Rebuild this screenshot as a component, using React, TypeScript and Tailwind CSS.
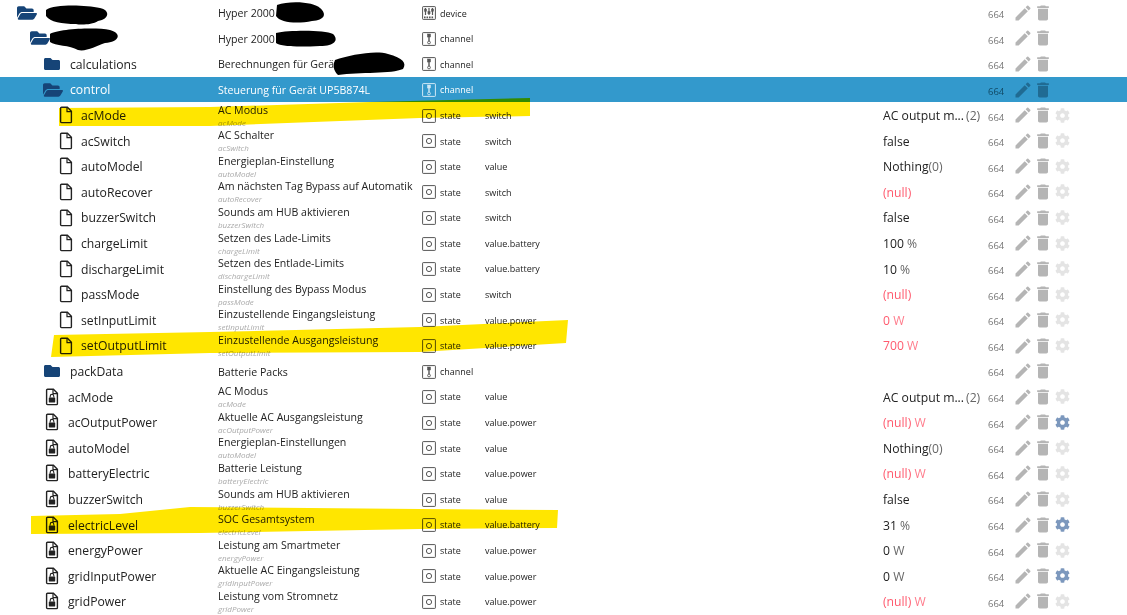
import React from 'react';
import { FaFolder, FaFolderOpen, FaCog } from 'react-icons/fa';
import { MdEdit, MdDelete } from 'react-icons/md';

type Kind = 'open' | 'closed' | 'file' | 'lock';

interface Row {
  name: string;
  title: string;
  sub?: string;
  type: 'device' | 'channel' | 'state';
  role?: string;
  value?: React.ReactNode;
  kind: Kind;
  indent: string;
  gear?: 'off' | 'on';
  selected?: boolean;
}

const red = (s: string, unit?: string) => (
  <span className="text-[#ff5a6e]">
    {s}
    {unit && <span className="opacity-80"> {unit}</span>}
  </span>
);
const plain = (s: string, unit?: string) => (
  <span>
    {s}
    {unit && <span className="text-[#666]"> {unit}</span>}
  </span>
);
const acOutput = (
  <span>
    AC output m...<span className="text-[#666] ml-0.5">(2)</span>
  </span>
);
const nothing = (
  <span>
    Nothing<span className="text-[#666]">(0)</span>
  </span>
);

const rows: Row[] = [
  { name: '', title: 'Hyper 2000', type: 'device', kind: 'open', indent: 'pl-[17px]' },
  { name: '', title: 'Hyper 2000', type: 'channel', kind: 'open', indent: 'pl-[30px]' },
  { name: 'calculations', title: 'Berechnungen für Gerät', type: 'channel', kind: 'closed', indent: 'pl-[43px]' },
  { name: 'control', title: 'Steuerung für Gerät UP5B874L', type: 'channel', kind: 'open', indent: 'pl-[43px]', selected: true },
  { name: 'acMode', title: 'AC Modus', sub: 'acMode', type: 'state', role: 'switch', value: acOutput, kind: 'file', indent: 'pl-[59px]', gear: 'off' },
  { name: 'acSwitch', title: 'AC Schalter', sub: 'acSwitch', type: 'state', role: 'switch', value: plain('false'), kind: 'file', indent: 'pl-[59px]', gear: 'off' },
  { name: 'autoModel', title: 'Energieplan-Einstellung', sub: 'autoModel', type: 'state', role: 'value', value: nothing, kind: 'file', indent: 'pl-[59px]', gear: 'off' },
  { name: 'autoRecover', title: 'Am nächsten Tag Bypass auf Automatik', sub: 'autoRecover', type: 'state', role: 'switch', value: red('(null)'), kind: 'file', indent: 'pl-[59px]', gear: 'off' },
  { name: 'buzzerSwitch', title: 'Sounds am HUB aktivieren', sub: 'buzzerSwitch', type: 'state', role: 'switch', value: plain('false'), kind: 'file', indent: 'pl-[59px]', gear: 'off' },
  { name: 'chargeLimit', title: 'Setzen des Lade-Limits', sub: 'chargeLimit', type: 'state', role: 'value.battery', value: plain('100', '%'), kind: 'file', indent: 'pl-[59px]', gear: 'off' },
  { name: 'dischargeLimit', title: 'Setzen des Entlade-Limits', sub: 'dischargeLimit', type: 'state', role: 'value.battery', value: plain('10', '%'), kind: 'file', indent: 'pl-[59px]', gear: 'off' },
  { name: 'passMode', title: 'Einstellung des Bypass Modus', sub: 'passMode', type: 'state', role: 'switch', value: red('(null)'), kind: 'file', indent: 'pl-[59px]', gear: 'off' },
  { name: 'setInputLimit', title: 'Einzustellende Eingangsleistung', sub: 'setInputLimit', type: 'state', role: 'value.power', value: red('0', 'W'), kind: 'file', indent: 'pl-[59px]', gear: 'off' },
  { name: 'setOutputLimit', title: 'Einzustellende Ausgangsleistung', sub: 'setOutputLimit', type: 'state', role: 'value.power', value: red('700', 'W'), kind: 'file', indent: 'pl-[59px]', gear: 'off' },
  { name: 'packData', title: 'Batterie Packs', type: 'channel', kind: 'closed', indent: 'pl-[43px]' },
  { name: 'acMode', title: 'AC Modus', sub: 'acMode', type: 'state', role: 'value', value: acOutput, kind: 'lock', indent: 'pl-[45px]', gear: 'off' },
  { name: 'acOutputPower', title: 'Aktuelle AC Ausgangsleistung', sub: 'acOutputPower', type: 'state', role: 'value.power', value: red('(null)', 'W'), kind: 'lock', indent: 'pl-[45px]', gear: 'on' },
  { name: 'autoModel', title: 'Energieplan-Einstellungen', sub: 'autoModel', type: 'state', role: 'value', value: nothing, kind: 'lock', indent: 'pl-[45px]', gear: 'off' },
  { name: 'batteryElectric', title: 'Batterie Leistung', sub: 'batteryElectric', type: 'state', role: 'value.power', value: red('(null)', 'W'), kind: 'lock', indent: 'pl-[45px]', gear: 'off' },
  { name: 'buzzerSwitch', title: 'Sounds am HUB aktivieren', sub: 'buzzerSwitch', type: 'state', role: 'value', value: plain('false'), kind: 'lock', indent: 'pl-[45px]', gear: 'off' },
  { name: 'electricLevel', title: 'SOC Gesamtsystem', sub: 'electricLevel', type: 'state', role: 'value.battery', value: plain('31', '%'), kind: 'lock', indent: 'pl-[45px]', gear: 'on' },
  { name: 'energyPower', title: 'Leistung am Smartmeter', sub: 'energyPower', type: 'state', role: 'value.power', value: plain('0', 'W'), kind: 'lock', indent: 'pl-[45px]', gear: 'off' },
  { name: 'gridInputPower', title: 'Aktuelle AC Eingangsleistung', sub: 'gridInputPower', type: 'state', role: 'value.power', value: plain('0', 'W'), kind: 'lock', indent: 'pl-[45px]', gear: 'on' },
  { name: 'gridPower', title: 'Leistung vom Stromnetz', sub: 'gridPower', type: 'state', role: 'value.power', value: red('(null)', 'W'), kind: 'lock', indent: 'pl-[45px]', gear: 'off' },
];

function FileIcon({ lock }: { lock?: boolean }) {
  return (
    <svg viewBox="0 0 14 18" className="w-[14px] h-[18px] shrink-0" fill="none">
      <path d="M1.6 2.2c0-.5.4-.9.9-.9h5.9l4 4v10.4c0 .5-.4.9-.9.9H2.5c-.5 0-.9-.4-.9-.9z" stroke="currentColor" strokeWidth="1.4" />
      <path d="M8 1.4v4.2h4.2" stroke="currentColor" strokeWidth="1.2" />
      {lock && (
        <>
          <rect x="3.8" y="9.4" width="6.4" height="5" rx="0.6" fill="currentColor" />
          <path d="M5.2 9.6V8.2a1.8 1.8 0 0 1 3.6 0v1.4" stroke="currentColor" strokeWidth="1.1" />
        </>
      )}
    </svg>
  );
}

function TypeIcon({ type }: { type: Row['type'] }) {
  return (
    <svg viewBox="0 0 14 14" className="w-[14px] h-[14px] shrink-0" fill="none" stroke="currentColor">
      <rect x="0.6" y="0.6" width="12.8" height="12.8" rx="0.6" strokeWidth="1" />
      {type === 'state' && <circle cx="7" cy="7" r="2.6" strokeWidth="1" />}
      {type === 'channel' && (
        <>
          <rect x="5.5" y="2" width="3" height="3" fill="currentColor" strokeWidth="0.5" />
          <path d="M7 5v4" strokeWidth="1.4" />
          <circle cx="7" cy="10.5" r="1.4" strokeWidth="0.9" />
        </>
      )}
      {type === 'device' && (
        <>
          <path d="M3.5 2v7M7 2v7M10.5 2v7" strokeWidth="1.2" />
          <rect x="2.4" y="3" width="2.2" height="2.4" fill="currentColor" strokeWidth="0.4" />
          <rect x="5.9" y="5.4" width="2.2" height="2.4" fill="currentColor" strokeWidth="0.4" />
          <rect x="9.4" y="3" width="2.2" height="2.4" fill="currentColor" strokeWidth="0.4" />
          <path d="M2 11.4h10" strokeWidth="1.6" strokeDasharray="1.6 0.9" />
        </>
      )}
    </svg>
  );
}

function NameIcon({ kind, selected }: { kind: Kind; selected?: boolean }) {
  if (kind === 'open') return <FaFolderOpen className="w-[20px] h-[18px] text-[#164477] shrink-0" />;
  if (kind === 'closed') return <FaFolder className="w-[18px] h-[16px] text-[#164477] shrink-0" />;
  return (
    <span className={selected ? 'text-white' : 'text-[#222]'}>
      <FileIcon lock={kind === 'lock'} />
    </span>
  );
}

function TreeRow({ row }: { row: Row }) {
  const gap = row.kind === 'open' ? 'gap-[7px]' : row.kind === 'closed' ? 'gap-[9px]' : row.kind === 'file' ? 'gap-2' : 'gap-[9px]';
  return (
    <div
      className={`flex items-center h-[25.6px] shrink-0 ${row.selected ? 'bg-[#3399cc] text-white' : 'text-[#222]'}`}
    >
      <div className={`w-[218px] shrink-0 flex items-center ${row.indent} ${gap}`}>
        <NameIcon kind={row.kind} selected={row.selected} />
        <span className="text-[12.2px] mt-[2px] whitespace-nowrap">{row.name}</span>
      </div>
      <div className={`w-[204px] shrink-0 flex flex-col leading-none ${row.sub ? '' : 'mt-[2px]'}`}>
        <span className="text-[10.6px] leading-[13px] whitespace-nowrap">{row.title}</span>
        {row.sub && <span className="text-[8px] leading-[8px] mt-[2px] italic text-[#aaa]">{row.sub}</span>}
      </div>
      <div className={`w-[63px] shrink-0 flex items-center gap-1 mt-[1px] text-[9px] ${row.selected ? 'text-white' : ''}`}>
        <span className={row.selected ? 'text-[#cfe8f5]' : 'text-[#555]'}>
          <TypeIcon type={row.type} />
        </span>
        <span>{row.type}</span>
      </div>
      <div className="w-[398px] shrink-0 mt-[1px] text-[9px]">{row.role}</div>
      <div className="w-[105px] shrink-0 mt-[2px] text-[12.2px] whitespace-nowrap">{row.value}</div>
      <div className={`w-[25px] shrink-0 text-[9.5px] mt-[5px] ${row.selected ? 'text-[#114a66]' : 'text-[#777]'}`}>664</div>
      <div className={`flex items-center w-[100px] ${row.selected ? 'text-[#206b93]' : 'text-[#b5b5b5]'}`}>
        <MdEdit className="w-[20px] h-[20px] shrink-0" />
        <MdDelete className="w-[20px] h-[20px] shrink-0" />
        {row.gear === 'off' && <FaCog className="w-[15px] h-[15px] ml-[2px] shrink-0 text-[#e4e4e4]" />}
        {row.gear === 'on' && <FaCog className="w-[15px] h-[15px] ml-[2px] shrink-0 text-[#7c98bd]" />}
      </div>
    </div>
  );
}

function Scribbles() {
  // marker strokes drawn on top of the screenshot
  return (
    <svg viewBox="0 0 1127 615" className="absolute left-0 top-0 w-[1127px] h-[615px] pointer-events-none">
      <g className="mix-blend-multiply">
        <path d="M59 108 L210 107 L370 102 L530 98 L530 116 L420 118 L210 126 L59 126Z" fill="#ffe600" />
        <path d="M54 335 L210 332 L420 327 L568 320 L566 343 L420 352 L210 353 L51 357Z" fill="#ffe600" />
        <path d="M31 516 L120 514 L190 507 L420 509 L558 510 L557 528 L420 529 L200 533 L31 534Z" fill="#ffe600" />
      </g>
      <g fill="#000">
        <path d="M46 10C55 4 85 5 100 8 110 10 110 19 98 21 92 25 80 25 76 24 62 24 50 22 46 16Z" />
        <path d="M50 34C58 29 95 27 110 30 122 33 120 42 105 43 96 46 86 52 78 50 70 45 55 46 50 42Z" />
        <path d="M277 5C290 0 315 2 320 8 327 14 325 20 312 21 298 24 280 23 276 16Z" />
        <path d="M276 33C290 30 325 30 333 34 339 40 335 46 320 46 300 47 282 47 276 43Z" />
        <path d="M335 60C350 55 375 50 388 54 403 58 407 63 403 69 392 74 360 72 338 75 333 70 333 65 335 60Z" />
      </g>
    </svg>
  );
}

export default function App() {
  return (
    <div className="relative w-[1127px] h-[615px] overflow-hidden bg-white font-['Open_Sans','Noto_Sans',sans-serif]">
      <div className="flex flex-col">
        {rows.map((row, i) => (
          <TreeRow key={i} row={row} />
        ))}
      </div>
      <Scribbles />
    </div>
  );
}
